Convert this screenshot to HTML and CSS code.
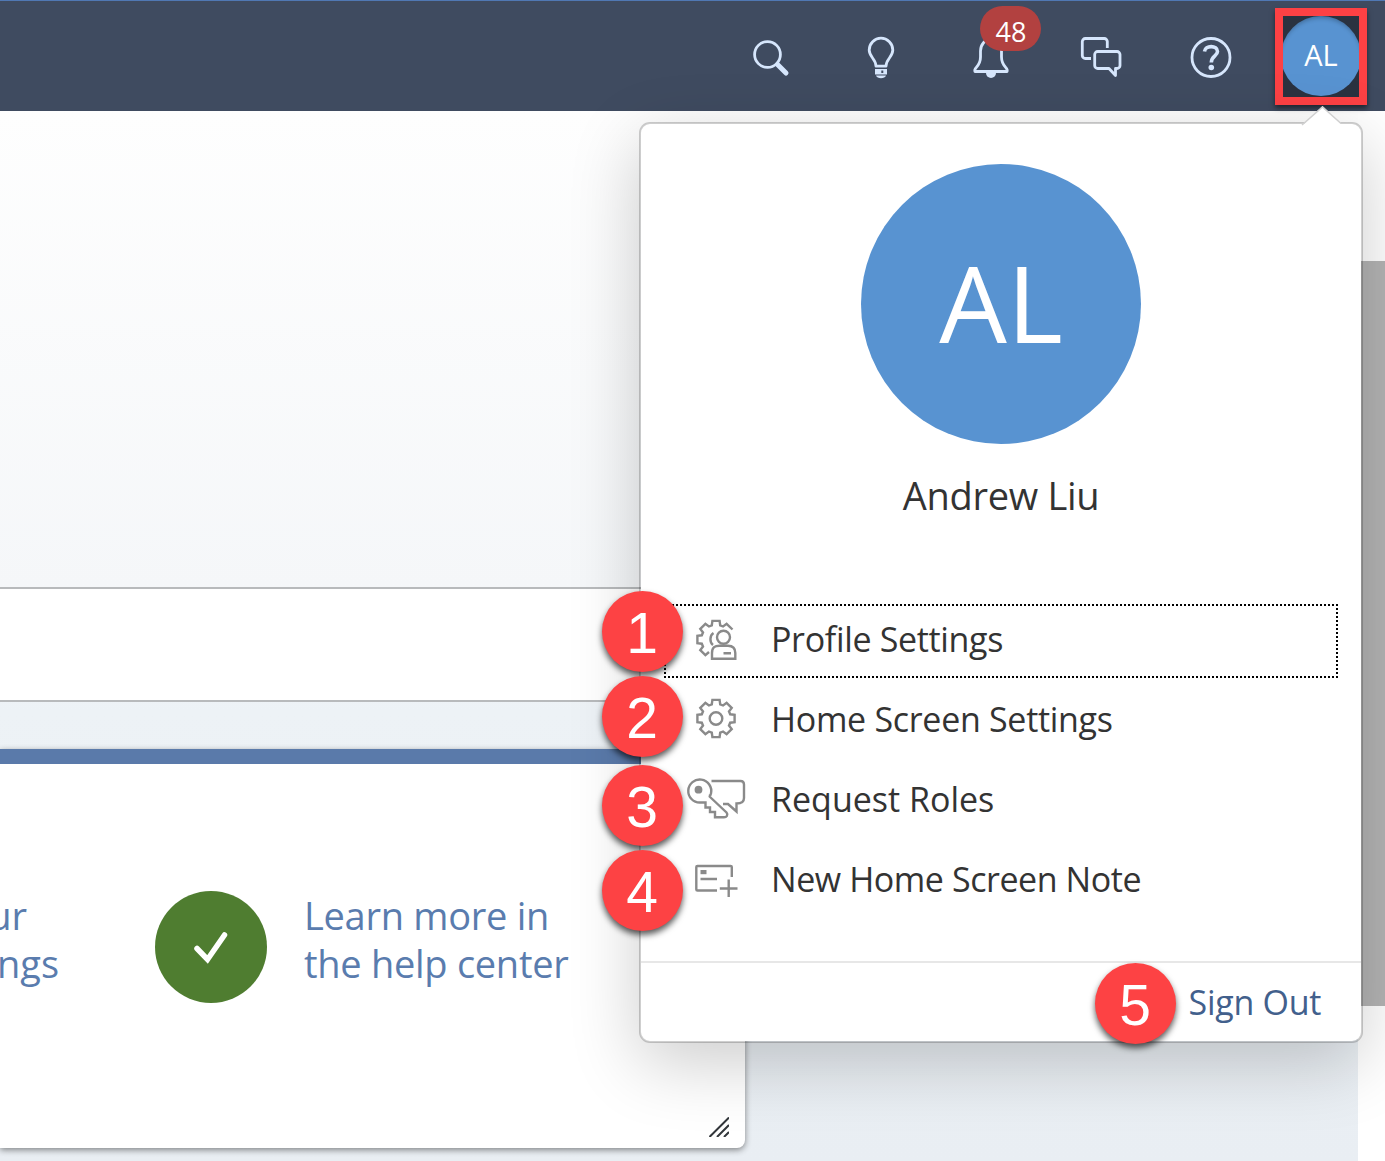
FILE: index.html
```html
<!DOCTYPE html>
<html lang="en">
<head>
<meta charset="utf-8">
<title>Home</title>
<link rel="stylesheet" href="styles.css">
</head>
<body>
<header class="shell">
  <button class="tool" aria-label="Search"><svg viewBox="-30 -30 60 60"><circle cx="-3.500" cy="-2.500" r="12.900"/><path class="handle" d="M6.500 7.500l8.500 8.500"/></svg></button>
  <button class="tool" aria-label="Tips"><svg viewBox="-30 -30 60 60"><path d="M-5 9.200C-5 2-11.800 0-11.800-7A11.800 11.800 0 0 1 11.800-7C11.800 0 5 2 5 9.200Z"/><path class="solid" fill-rule="evenodd" d="M-6 12H6v5.500H-6zM.3 13.500v2.500h2v-2.500zM-5 18.500H5C4 22-4 22-5 18.500Z"/></svg></button>
  <button class="tool" aria-label="Notifications"><svg viewBox="-30 -30 60 60"><path d="M-16 14.500H16C18 11 10.500 10 10.500 0V-6C10.500-12 6-18 0-18S-10.500-12-10.500-6V0C-10.500 10-18 11-16 14.500Z"/><path class="solid" d="M-5 16H5A5 5 0 0 1-5 16Z"/></svg><span class="count">48</span></button>
  <button class="tool" aria-label="Chat"><svg viewBox="-30 -30 60 60"><path d="M6.300-9V-15.500a3 3 0 0 0-3-3H-15.700a3 3 0 0 0-3 3V-1.500a3 3 0 0 0 3 3H-10"/><path d="M-3.300-5.500H16a3 3 0 0 1 3 3V8.500a3 3 0 0 1-3 3H14.500V18.500L8 11.500H-3.300a3 3 0 0 1-3-3V-2.500a3 3 0 0 1 3-3Z"/></svg></button>
  <button class="tool" aria-label="Help"><svg viewBox="-30 -30 60 60"><circle cy=".5" r="19"/><path class="heavy" d="M-6.500-5.500C-6-12 6.500-12 6.500-5.500C6.500-1 .3-1 .3 5.500"/><circle class="solid" cx=".3" cy="10.500" r="2.800"/></svg></button>
  <button class="tool user" aria-label="Account"><span class="frame"><span class="avatar">AL</span></span></button>
</header>

<main class="main">
  <div class="content">
    <div class="field"></div>
    <section class="card">
      <div class="links">
        <a class="link cut"><span class="first">ur</span><span class="second">ngs</span></a>
        <span class="status"><svg viewBox="0 0 112 112"><path d="M42 57.500l10.500 11L69.500 44"/></svg></span>
        <a class="link help">Learn more in<br>the help center</a>
      </div>
      <svg class="resize" viewBox="0 0 20 20"><path d="M.5 20L20 .5M8 20L20 8M15 20l5-5"/></svg>
    </section>
  </div>
  <div class="scroll"><div class="thumb"></div></div>
</main>

<aside class="popover">
  <svg class="arrow" viewBox="0 0 42 20"><path class="fill" d="M1 20L21.500 0 42 20Z"/><path class="edge" d="M1 19L21.500 1 40 17.500"/></svg>
  <div class="profile">
    <div class="portrait">AL</div>
    <div class="name">Andrew Liu</div>
  </div>
  <nav class="menu">
    <a class="item focused"><svg viewBox="-30 -30 60 60"><g transform="translate(0 -1.500)"><path d="M16.500-10L10.600-15.700 7.100-13 4.200-14.200 3.600-18.600-3.600-18.600-4.200-14.200-7.100-13-10.600-15.700-15.700-10.600-13-7.100-14.200-4.200-18.600-3.600-18.600 3.600-14.200 4.200-13 7.100-15.700 10.600-10.600 15.700-7 12.500"/><path d="M-2.500-6.500C-6.500-4-6.500 3-3 5.500"/><circle cx="7.500" cy="-2.200" r="6.500"/><path d="M-4 19.300V13.500C-4 7.500-1 6.200 3.500 6.200H12C16.500 6.200 19.300 8 19.300 13.500V19.300ZM7.500 13.800H15"/></g></svg><span class="profile-label">Profile Settings</span></a>
    <a class="item"><svg viewBox="-30 -30 60 60"><g transform="translate(0 -2.500)"><path d="M-4.200-14.200L-3.600-18.600 3.600-18.600 4.200-14.200 7.100-13 10.600-15.700 15.700-10.600 13-7.100 14.200-4.200 18.600-3.600 18.600 3.600 14.200 4.200 13 7.100 15.700 10.600 10.600 15.700 7.100 13 4.200 14.200 3.600 18.600-3.600 18.600-4.200 14.200-7.100 13-10.600 15.700-15.700 10.600-13 7.100-14.200 4.200-18.600 3.600-18.600-3.600-14.200-4.200-13-7.100-15.700-10.600-10.600-15.700-7.100-13Z"/><circle r="6.300"/></g></svg><span class="home-label">Home Screen Settings</span></a>
    <a class="item"><svg viewBox="-30 -30 60 60"><path d="M-7-5L10.500 11.500C12.500 14 10.500 16.200 8 16.200H-1V11H-6V6.500H-10.500V1.500H-16A11.500 11.500 0 1 1-5-7.500C-5-6-6-5.500-7-5"/><circle class="dot" cx="-17.500" cy="-11.300" r="3.900"/><path d="M-4.500-20H24.500Q28-20 28-16.500V-3Q28 2.500 20.500 2.500V10.500L12 3H7"/></svg><span>Request Roles</span></a>
    <a class="item"><svg viewBox="-30 -30 60 60"><path d="M1 9.500H-18.500Q-19.700 9.500-19.700 8.500V-14Q-19.700-15-18.500-15H14.500Q15.800-15 15.800-14V-4M-15.500-2H1M12.700-1.500V16M3.800 7.500H21.500"/><path class="dot" d="M-15.500-11h6v4.200h-6z"/></svg><span class="note-label">New Home Screen Note</span></a>
  </nav>
  <footer class="foot"><a class="signout">Sign Out</a></footer>
</aside>

<span class="step s1">1</span>
<span class="step s2">2</span>
<span class="step s3">3</span>
<span class="step s4">4</span>
<span class="step s5">5</span>
</body>
</html>
```

FILE: styles.css
```css
* { box-sizing: border-box; }
body {
  margin: 0;
  width: 1385px;
  height: 1161px;
  position: relative;
  overflow: hidden;
  display: flex;
  flex-direction: column;
  font-family: "Open Sans", "Noto Sans", sans-serif;
  color: #32363a;
}
button { border: 0; padding: 0; background: none; font: inherit; }

.shell {
  height: 111px;
  flex: none;
  border-top: 1px solid #5078b4;
  background: #3f4b60;
  display: flex;
  justify-content: flex-end;
  padding-right: 9px;
}
.tool { width: 110px; height: 110px; padding-top: 2px; position: relative; display: flex; align-items: center; justify-content: center; }
.tool svg { width: 60px; height: 60px; fill: none; stroke: #d6e6fc; stroke-width: 2.8; stroke-linejoin: round; }
.tool .handle { stroke-width: 5; stroke-linecap: round; }
.tool .heavy { stroke-width: 3.6; }
.tool .solid { fill: #d6e6fc; stroke: none; }
.count {
  position: absolute;
  left: 44px;
  top: 5px;
  width: 61px;
  height: 45px;
  border-radius: 23px;
  background: #b24140;
  color: #fff;
  font-size: 27px;
  font-weight: 500;
  line-height: 51px;
  text-align: center;
  padding-left: 1px;
}
.user { padding-top: 1px; }
.frame {
  width: 92px;
  height: 97px;
  border: 8px solid #fd4144;
  background: #2a3240;
  display: flex;
  align-items: center;
  justify-content: center;
  overflow: hidden;
  box-shadow: 0 3px 5px rgba(0, 0, 0, .5);
}
.avatar {
  flex: none;
  width: 80px;
  height: 80px;
  margin-top: -1px;
  border-radius: 50%;
  background: #5893d1;
  color: #fff;
  font-size: 29px;
  font-weight: 500;
  line-height: 78px;
  text-align: center;
  box-shadow: inset 0 4px 4px -2px rgba(0, 0, 0, .25);
}

.main { flex: 1; display: flex; }
.content { width: 1358px; padding-top: 476px; background: linear-gradient(#fefefe, #f5f7f9 476px, #edf2f6 600px, #e9eef3); }
.field { height: 115px; border: solid #b8babc; border-width: 2px 0; background: #fff; }
.card {
  width: 745px;
  height: 399px;
  margin-top: 47px;
  border-top: 15px solid #5a7aaa;
  border-radius: 0 0 8px 0;
  background: #fff;
  box-shadow: 0 2px 6px rgba(0, 0, 0, .45);
  display: flex;
  flex-direction: column;
  justify-content: space-between;
}
.links { display: flex; align-items: center; padding-top: 127px; }
.link { color: #5a7cae; font-size: 38px; line-height: 48px; white-space: nowrap; }
.cut { width: 155px; display: flex; flex-direction: column; margin-top: -16px; }
.cut span { display: flex; justify-content: flex-end; }
.first { width: 27px; }
.second { width: 59px; }
.status { width: 112px; height: 112px; border-radius: 50%; background: #4f7d30; }
.status svg { display: block; fill: none; stroke: #fff; stroke-width: 5.5; stroke-linecap: round; }
.help { margin: -16px 0 0 37px; letter-spacing: -.28px; }
.resize { width: 20px; height: 20px; margin: 0 16px 11px auto; stroke: #32363a; stroke-width: 2; }

.scroll { width: 27px; background: #fff; padding-top: 150px; }
.thumb { height: 745px; background: #b4b4b4; }

.popover {
  position: absolute;
  left: 639px;
  top: 122px;
  width: 724px;
  height: 921px;
  border: 2px solid rgba(0, 0, 0, .19);
  border-radius: 11px;
  background: #fff;
  background-clip: padding-box;
  box-shadow: 0 20px 70px rgba(0, 0, 0, .2);
  display: flex;
  flex-direction: column;
}
.arrow { position: absolute; left: 660px; top: -18px; width: 42px; height: 20px; }
.arrow .fill { fill: #fff; }
.arrow .edge { fill: none; stroke: #d0d0d0; stroke-width: 1.5; }
.profile { height: 477px; padding-top: 40px; display: flex; flex-direction: column; align-items: center; }
.portrait {
  width: 280px;
  height: 280px;
  border-radius: 50%;
  background: #5893d1;
  color: #fff;
  font-size: 107px;
  font-weight: 500;
  line-height: 275px;
  text-align: center;
}
.name { margin-top: 25px; font-size: 38px; line-height: 52px; letter-spacing: -.28px; color: #333; white-space: nowrap; }
.menu { flex: 1; padding: 3px 23px 0; display: flex; flex-direction: column; gap: 6px; }
.item { height: 74px; padding: 0 0 0 20px; border: 2px solid transparent; display: flex; align-items: center; gap: 25px; font-size: 34px; color: #333; white-space: nowrap; }
.item span { margin-top: -4px; }
.profile-label { letter-spacing: -.33px; }
.home-label { letter-spacing: -.3px; }
.note-label { letter-spacing: -.43px; }
.focused { border: 2px dotted #000; }
.item svg { width: 60px; height: 60px; fill: none; stroke: #8a8a8a; stroke-width: 2.4; }
.item .dot { fill: #8a8a8a; stroke: none; }
.foot { height: 80px; border-top: 2px solid #e7e7e7; padding-right: 40px; display: flex; align-items: center; justify-content: flex-end; }
.signout { font-size: 34px; letter-spacing: -.3px; color: #42608c; }

.step {
  position: absolute;
  left: 602px;
  width: 81px;
  height: 81px;
  border-radius: 50%;
  background: #fd4244;
  color: #fff;
  font: 57px/84px "Liberation Sans", Arial, sans-serif;
  text-align: center;
  text-indent: -1px;
  box-shadow: 0 4px 6px rgba(0, 0, 0, .65);
}
.s1 { top: 591px; }
.s2 { top: 676px; }
.s3 { top: 765px; }
.s4 { top: 850px; }
.s5 { top: 963px; left: 1095px; }
```
